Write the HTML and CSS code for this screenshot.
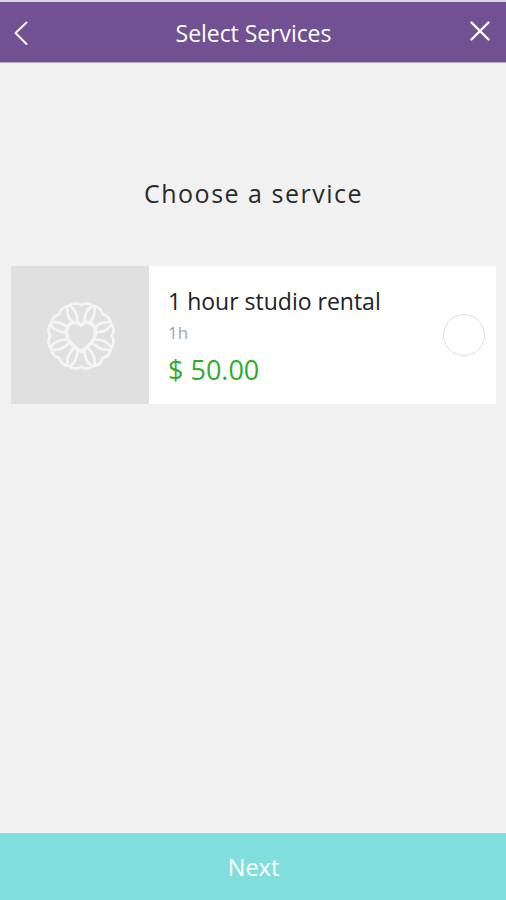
FILE: index.html
```html
<!DOCTYPE html>
<html lang="en">
<head>
<meta charset="utf-8">
<title>Select Services</title>
<link rel="stylesheet" href="styles.css">
</head>
<body>
<header class="bar">
  <svg class="back" viewBox="0 0 16 26"><path d="M13.5 2.5 2.5 13l11 11"/></svg>
  <h1>Select Services</h1>
  <svg class="close" viewBox="0 0 22 22"><path d="m2.5 2.5 17 17m0-17-17 17"/></svg>
</header>
<main>
  <h2>Choose a service</h2>
  <article class="card">
    <div class="thumb">
      <svg class="flower" viewBox="-38 -38 76 76">
        <defs>
          <g id="petal">
            <path d="M-11.8-28.500C-8-33.500-4-33.500 0-32.500 4-33.500 8-33.500 11.8-28.500"/>
            <path d="M-2-31C-5-26-4.500-20-2-14M2-31C5-26 4.500-20 2-14"/>
          </g>
        </defs>
        <use href="#petal" transform="rotate(22.5)"/>
        <use href="#petal" transform="rotate(67.5)"/>
        <use href="#petal" transform="rotate(112.5)"/>
        <use href="#petal" transform="rotate(157.5)"/>
        <use href="#petal" transform="rotate(202.5)"/>
        <use href="#petal" transform="rotate(247.5)"/>
        <use href="#petal" transform="rotate(292.5)"/>
        <use href="#petal" transform="rotate(337.5)"/>
        <path class="heart" d="M0 15.500C-5 13-14.500 5-14.500-3.500C-14.500-14-4-16 0-10.500C4-16 14.500-14 14.500-3.500C14.500 5 5 13 0 15.500Z"/>
      </svg>
    </div>
    <div class="info">
      <div class="name">1 hour studio rental</div>
      <div class="time">1h</div>
      <div class="price">$ 50.00</div>
    </div>
    <span class="radio"></span>
  </article>
</main>
<button class="next">Next</button>
</body>
</html>
```
FILE: styles.css
```css
* { box-sizing: border-box; }
body {
  margin: 0;
  height: 900px;
  display: flex;
  flex-direction: column;
  background: #f1f1f1;
  font-family: "Open Sans", "Noto Sans", sans-serif;
}
svg { fill: none; stroke: #fff; stroke-linecap: round; stroke-linejoin: round; }
.bar {
  height: 63px;
  flex: none;
  display: flex;
  align-items: center;
  justify-content: space-between;
  padding: 3px 15px 2px 13px;
  background: #715192;
  border-top: 2px solid #d5d8e3;
  border-bottom: 1px solid #b8a7c9;
  color: #fff;
}
.bar h1 { margin: 0 0 0 9px; font-size: 23px; font-weight: 400; line-height: 30px; letter-spacing: -.05px; }
.back { width: 16px; height: 26px; stroke-width: 1.9; }
.close { width: 22px; height: 22px; stroke-width: 2.4; margin-top: -4px; }
main { flex: 1; padding: 110px 10px 0 11px; }
h2 {
  margin: 0;
  text-align: center;
  font-size: 25px;
  line-height: 40px;
  font-weight: 400;
  letter-spacing: 1.5px;
  color: #2a2a2a;
}
.card {
  margin-top: 53px;
  height: 138px;
  display: flex;
  align-items: center;
  background: #fff;
}
.thumb {
  width: 138px;
  height: 138px;
  display: flex;
  align-items: center;
  justify-content: center;
  background: #e0e0e0;
}
.flower { width: 76px; height: 76px; margin: 2px 0 0 2px; stroke: #f5f5f5; stroke-width: 2.7; }
.heart { fill: #e0e0e0; stroke-width: 3.5; }
.info { flex: 1; padding: 7px 0 0 19px; }
.name { font-size: 23px; line-height: 32px; color: #222; }
.time { font-size: 17px; line-height: 31px; color: #a2a2a2; }
.price { font-size: 27px; line-height: 44px; color: #2fac2a; }
.radio {
  width: 42px;
  height: 42px;
  margin-right: 11px;
  border: 1px solid #dedede;
  border-radius: 50%;
}
.next {
  height: 67px;
  flex: none;
  border: 0;
  padding: 1px 0 0 1px;
  background: #80dfdd;
  color: #fff;
  font: 400 23.5px/30px "Open Sans", "Noto Sans", sans-serif;
}
```
